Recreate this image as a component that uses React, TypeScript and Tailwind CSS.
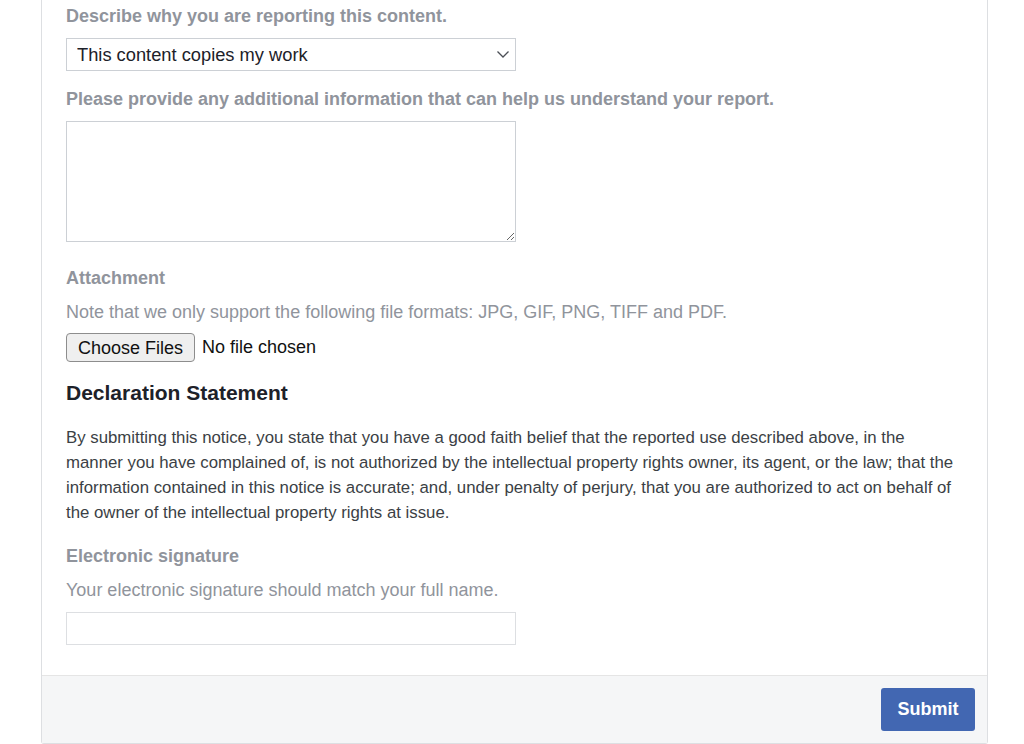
import React from 'react';

const font = { fontFamily: '"Liberation Sans", Arial, Helvetica, sans-serif' };

function Label({ children, className = '' }: { children: React.ReactNode; className?: string }) {
  return (
    <div className={`text-[18px] leading-[20px] font-bold text-[#90949c] ${className}`}>{children}</div>
  );
}

function Help({ children, className = '' }: { children: React.ReactNode; className?: string }) {
  return <div className={`text-[18px] leading-[20px] text-[#90949c] ${className}`}>{children}</div>;
}

export default function App() {
  return (
    <div className="min-h-[744px] bg-white pl-[41px]" style={font}>
      <div className="w-[947px] border-x border-b border-[#dddfe2] rounded-b-[3px] bg-white">
        <div className="px-[24px] pt-[6px] pb-[30px]">
          <Label>Describe why you are reporting this content.</Label>

          <div className="relative mt-[12px] w-[450px]">
            <select
              defaultValue="copies"
              className="appearance-none w-full h-[33px] border border-[#ccd0d5] bg-white pl-[10px] pr-8 text-[18.3px] text-[#1d2129] outline-none"
            >
              <option value="copies">This content copies my work</option>
            </select>
            <svg
              className="absolute right-[6px] top-[12px] pointer-events-none"
              width="14"
              height="9"
              viewBox="0 0 14 9"
              fill="none"
              stroke="#4b4f56"
              strokeWidth="1.3"
            >
              <path d="M1.5 1.5 L7 7 L12.5 1.5" />
            </svg>
          </div>

          <Label className="mt-[18px]">
            Please provide any additional information that can help us understand your report.
          </Label>

          <textarea className="block mt-[12px] w-[450px] h-[121px] border border-[#ccd0d5] bg-white outline-none" />

          <Label className="mt-[26px]">Attachment</Label>
          <Help className="mt-[14px]">
            Note that we only support the following file formats: JPG, GIF, PNG, TIFF and PDF.
          </Help>

          <div className="mt-[11px] flex items-center gap-[7px]">
            <button className="h-[29px] px-[11px] rounded-[4px] border border-[#8d8d8d] bg-[#efefef] text-[18px] leading-[20px] text-[#111]">
              Choose Files
            </button>
            <span className="text-[18px] text-[#111]">No file chosen</span>
          </div>

          <h2 className="mt-[19px] text-[21px] leading-[24px] font-bold text-[#1d2129]">Declaration Statement</h2>

          <p className="mt-[20px] text-[16.8px] leading-[25px] text-[#3b3f45]">
            By submitting this notice, you state that you have a good faith belief that the reported use described
            above, in the manner you have complained of, is not authorized by the intellectual property rights owner,
            its agent, or the law; that the information contained in this notice is accurate; and, under penalty of
            perjury, that you are authorized to act on behalf of the owner of the intellectual property rights at issue.
          </p>

          <Label className="mt-[21px]">Electronic signature</Label>
          <Help className="mt-[14px]">Your electronic signature should match your full name.</Help>

          <input
            type="text"
            className="block mt-[12px] w-[450px] h-[33px] border border-[#dddfe2] bg-white outline-none"
          />
        </div>

        <div className="flex justify-end border-t border-[#e5e5e5] bg-[#f5f6f7] pt-[12px] pb-[12px] pr-[12px]">
          <button className="h-[43px] w-[94px] rounded-[3px] bg-[#4267b2] text-[18px] font-bold text-white">
            Submit
          </button>
        </div>
      </div>
    </div>
  );
}
